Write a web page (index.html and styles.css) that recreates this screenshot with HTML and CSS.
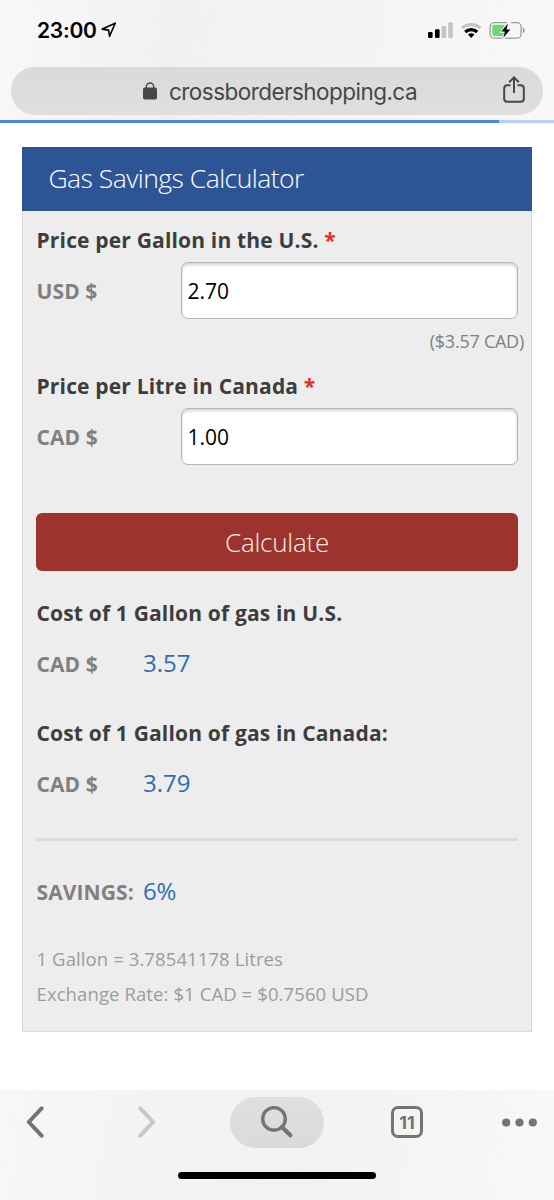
FILE: index.html
```html
<!DOCTYPE html>
<html lang="en">
<head>
<meta charset="utf-8">
<title>Gas Savings Calculator</title>
<link rel="stylesheet" href="styles.css">
</head>
<body>
<div class="screen">
  <header class="browser-top">
    <div class="status">
      <span class="time">23:00</span>
      <svg class="location" width="16" height="16" viewBox="0 0 16 16"><path d="M1.2 7.1 14.2 1.2 8.6 14.3 7.6 8.1Z" fill="none" stroke="#000" stroke-width="1.6" stroke-linejoin="round"/></svg>
      <svg class="indicators" width="98" height="20" viewBox="0 0 98 20">
        <rect x="0" y="12" width="4.6" height="6" rx="1.2"/>
        <rect x="7" y="9.3" width="4.6" height="8.7" rx="1.2"/>
        <rect x="13.6" y="6" width="4.6" height="12" rx="1.2" fill="#c4c4c5"/>
        <rect x="20.2" y="2.3" width="4.6" height="15.7" rx="1.2" fill="#c4c4c5"/>
        <path d="M34 8.2a13.4 13.4 0 0 1 18.4 0" fill="none" stroke="#c4c4c5" stroke-width="3.2"/>
        <path d="M37.2 12a8.7 8.7 0 0 1 12 0" fill="none" stroke="#000" stroke-width="3.2"/>
        <path d="M40 14.6a4.6 4.6 0 0 1 6.4 0L43.2 18Z"/>
        <rect x="62.1" y="2.6" width="31" height="15.6" rx="4.3" fill="none" stroke="#9b9b9c" stroke-width="1.3"/>
        <rect x="64.2" y="4.7" width="13" height="11.4" rx="2" fill="#6fd670"/>
        <path d="M80.9 1.2 73 11.9h4l-2.1 7.7 8.4-10.8h-4.4l3.9-7.6Z" fill="#f6f6f6" stroke="#f6f6f6" stroke-width="1.5"/>
        <path d="M80 3.6 73.3 11.5h3.6l-1.5 6.3 6.9-8.4h-3.8Z"/>
        <path d="M94.9 7.7c2.5.6 2.5 4.7 0 5.4Z" fill="#9b9b9c"/>
      </svg>
    </div>
    <div class="address">
      <svg class="lock" width="14" height="18" viewBox="0 0 14 18"><path d="M3.3 8V4.7a3.7 3.7 0 0 1 7.4 0V8" fill="none" stroke="#474748" stroke-width="1.4"/><rect x="0" y="5.5" width="14" height="12" rx="1.8" fill="#474748"/></svg>
      <span class="url">crossbordershopping.ca</span>
      <svg class="share" width="22" height="28" viewBox="0 0 22 28"><path d="M7.5 9.2H4.3A3.1 3.1 0 0 0 1.2 12.3v10.4a3.1 3.1 0 0 0 3.1 3.1h13.4a3.1 3.1 0 0 0 3.1-3.1V12.3a3.1 3.1 0 0 0-3.1-3.1h-3.2M11 17V1.7M6.2 6.2 11 1.4l4.8 4.8" fill="none" stroke="#474748" stroke-width="2"/></svg>
    </div>
    <div class="progress"><div class="progress-value"></div></div>
  </header>

  <main class="page">
    <section class="card">
      <h1 class="card-title"><span>Gas Savings Calculator</span></h1>
      <div class="card-body">
        <div class="label first"><span>Price per Gallon in the U.S.</span> <span class="required">*</span></div>
        <div class="field"><span class="currency">USD $</span><div class="input"><span>2.70</span></div></div>
        <div class="hint"><span>($3.57 CAD)</span></div>
        <div class="label second"><span>Price per Litre in Canada</span> <span class="required">*</span></div>
        <div class="field"><span class="currency">CAD $</span><div class="input"><span>1.00</span></div></div>
        <div class="button"><span>Calculate</span></div>
        <div class="cost"><span>Cost of 1 Gallon of gas in U.S.</span></div>
        <div class="result"><span class="currency">CAD $</span><span class="amount">3.57</span></div>
        <div class="cost next"><span>Cost of 1 Gallon of gas in Canada:</span></div>
        <div class="result"><span class="currency">CAD $</span><span class="amount">3.79</span></div>
        <div class="rule"></div>
        <div class="result"><span class="currency">SAVINGS:</span><span class="amount percent">6%</span></div>
        <div class="notes">
          <div><span>1 Gallon = 3.78541178 Litres</span></div>
          <div><span>Exchange Rate: $1 CAD = $0.7560 USD</span></div>
        </div>
      </div>
    </section>
  </main>

  <footer class="toolbar">
    <div class="tools">
      <svg class="back" width="18" height="32" viewBox="0 0 18 32"><path d="M15.6 2.3 2.8 16l12.8 13.7" fill="none" stroke="#747475" stroke-width="4" stroke-linecap="round" stroke-linejoin="round"/></svg>
      <svg class="forward" width="18" height="32" viewBox="0 0 18 32"><path d="M2.3 2.3 15.1 16 2.3 29.7" fill="none" stroke="#c7c7c8" stroke-width="4" stroke-linecap="round" stroke-linejoin="round"/></svg>
      <div class="search"><svg width="32" height="32" viewBox="0 0 32 32"><circle cx="13" cy="12.9" r="11.3" fill="none" stroke="#747475" stroke-width="3.4"/><path d="m21 21 8.3 8.3" stroke="#747475" stroke-width="4.2" stroke-linecap="round"/></svg></div>
      <div class="tabs">11</div>
      <svg class="more" width="35" height="9" viewBox="0 0 35 9" fill="#747475"><circle cx="4.2" cy="4.5" r="4.1"/><circle cx="17.5" cy="4.5" r="4.1"/><circle cx="30.8" cy="4.5" r="4.1"/></svg>
    </div>
    <div class="home-bar"></div>
  </footer>
</div>
</body>
</html>
```

FILE: styles.css
```css
* { box-sizing: border-box; }
body { margin: 0; background: #fff; font-family: "Open Sans", sans-serif; }
svg { display: block; flex: none; }
.screen { width: 554px; height: 1200px; display: flex; flex-direction: column; background: #fff; white-space: nowrap; }

.browser-top { height: 123px; background: linear-gradient(100deg, #f8f8f8, #f1f1f2 30%, #f3f3f4 55%, #f8f8f8); }
.status { height: 67px; display: flex; align-items: flex-start; padding: 20px 28px 0 37px; }
.time { font: 600 21px/22px Inter, sans-serif; letter-spacing: -0.25px; width: 61px; }
.location { margin: 2px 0 0 3px; }
.indicators { margin-left: auto; }
.address { display: flex; align-items: center; height: 48px; margin: 0 11px; border-radius: 24px; background: linear-gradient(#dadadb, #dfdfdf); padding: 0 18px 0 132px; }
.url { font: 400 22.5px/50px Inter, sans-serif; letter-spacing: -0.54px; color: #474748; margin-left: 12px; padding-top: 1px; }
.share { margin: -3px 0 0 auto; }
.progress { height: 3px; margin-top: 5px; background: #b5d0f2; }
.progress-value { width: 499px; height: 3px; background: #4c87d9; }

.page { flex: 1; padding: 24px 22px 0; }
.card { height: 885px; background: #ededed; border: 1px solid #d9d9d9; border-top: 0; }
.card-title { margin: 0 -1px; height: 63.5px; background: #2d5596; color: #fff; font-size: 26.5px; letter-spacing: -0.54px; line-height: 63px; font-weight: 300; padding-left: 26.5px; }
.card-body { padding: 0 13px; }
.label, .cost { color: #3d3d40; font-size: 21px; font-weight: 700; letter-spacing: 0.17px; padding-left: 0.5px; }
.label { line-height: 40px; height: 42px; }
.first { margin-top: 9px; }
.second { margin-top: 3px; }
.required { color: #e3301f; }
.field { display: flex; align-items: center; height: 57.5px; }
.currency { color: #808080; font-weight: 700; font-size: 21px; letter-spacing: 0.1px; width: 144.5px; padding: 1px 0 0 0.5px; }
.input { width: 337.5px; height: 57.5px; border: 1.5px solid #b5b5b5; border-radius: 7px; background: #fff; box-shadow: inset 0 2px 3px #d2d2d2; color: #000; font-size: 21px; line-height: 57px; padding-left: 6px; }
.hint { height: 43.5px; line-height: 45px; text-align: right; font-size: 18px; letter-spacing: -0.25px; color: #808080; margin-right: -6px; }
.button { margin-top: 48px; width: 482px; height: 58px; background: #9c342d; color: #fbeee4; border-radius: 6px; text-align: center; font-size: 26px; letter-spacing: -0.25px; line-height: 58px; font-weight: 300; }
.cost { height: 50px; line-height: 50px; margin-top: 17px; }
.cost.next { margin-top: 19px; }
.result { display: flex; align-items: center; height: 51px; line-height: 50px; }
.result .currency { width: 107px; }
.amount { color: #2e6db5; font-size: 24px; font-weight: 375; letter-spacing: 0; padding-bottom: 1px; }
.percent { letter-spacing: -0.3px; }
.rule { height: 2.5px; width: 482px; background: #dadada; margin: 29px 0 25px; }
.notes { margin-top: 24px; color: #9c9c9c; font-size: 18.5px; letter-spacing: 0.1px; padding-left: 0.5px; line-height: 35.5px; }

.toolbar { height: 110px; background: linear-gradient(100deg, #f7f7f7, #f3f3f4 30%, #f2f2f3 55%, #f8f8f8); }
.tools { height: 64px; display: flex; align-items: center; padding: 0 17px 0 26px; }
.forward { margin-left: 94px; }
.search { width: 94px; height: 51px; border-radius: 26px; background: linear-gradient(#dfdfdf, #dadada); margin-left: 74px; display: flex; align-items: center; justify-content: center; }
.tabs { width: 32px; height: 32px; border: 3px solid #747475; border-radius: 7px; margin-left: 67px; color: #747475; font: 700 18px/27px Inter, sans-serif; text-align: center; }
.more { margin-left: auto; }
.home-bar { width: 198px; height: 7px; border-radius: 4px; background: #000; margin: 18px auto 0; }
```
